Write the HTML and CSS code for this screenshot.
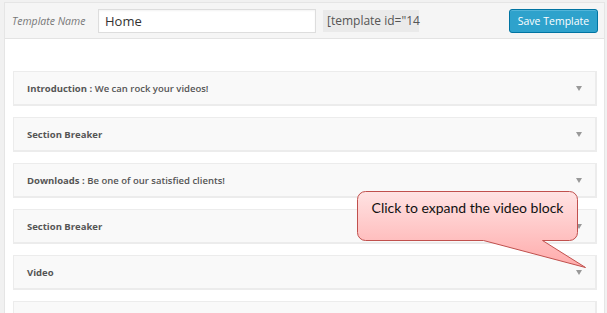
FILE: index.html
```html
<!DOCTYPE html>
<html lang="en">
<head>
    <meta charset="UTF-8">
    <title>Template Builder</title>
    <link rel="stylesheet" href="styles.css">
</head>
<body>
    <div class="panel">
        <div class="panel-head">
            <label class="name-label" for="tplName">Template Name</label>
            <input class="name-input" id="tplName" type="text" value="Home">
            <div class="shortcode">[template id="14</div>
            <button class="btn-save">Save Template</button>
        </div>

        <div class="blocks">
            <div class="block">
                <span class="block-title"><b>Introduction :</b> We can rock your videos!</span>
                <span class="toggle"></span>
            </div>
            <div class="block">
                <span class="block-title"><b>Section Breaker</b></span>
                <span class="toggle"></span>
            </div>
            <div class="block">
                <span class="block-title"><b>Downloads :</b> Be one of our satisfied clients!</span>
                <span class="toggle"></span>
            </div>
            <div class="block">
                <span class="block-title"><b>Section Breaker</b></span>
                <span class="toggle"></span>
            </div>
            <div class="block">
                <span class="block-title"><b>Video</b></span>
                <span class="toggle"></span>
            </div>
            <div class="block">
                <span class="block-title"></span>
            </div>
        </div>

        <!-- callout pointing at the video row toggle -->
        <div class="callout">
            <svg width="240" height="90" viewBox="0 0 240 90">
                <defs>
                    <linearGradient id="pink" x1="0" y1="0" x2="0" y2="1">
                        <stop offset="0" stop-color="#ffe3e3"/>
                        <stop offset="1" stop-color="#ffaaaa"/>
                    </linearGradient>
                </defs>
                <path d="M8.5 0.5 H212.5 A8 8 0 0 1 220.5 8.5 V41.5 A8 8 0 0 1 212.5 49.5 H185.5 L228.5 76.5 L126.5 49.5 H8.5 A8 8 0 0 1 0.5 41.5 V8.5 A8 8 0 0 1 8.5 0.5 Z"
                      fill="url(#pink)" stroke="#c0504d" stroke-width="1"/>
            </svg>
            <div class="callout-text">Click to expand the video block</div>
        </div>
    </div>
</body>
</html>
```

FILE: styles.css
```css
* {
    margin: 0;
    padding: 0;
    box-sizing: border-box;
}

body {
    font-family: 'Open Sans', 'Liberation Sans', sans-serif;
    background: #f1f1f1;
    padding: 2px 2px 0 4px;
    height: 313px;
    overflow: hidden;
}

.panel {
    position: relative;
    width: 601px;
    height: 311px;
    overflow: hidden;
    background: #fff;
    border: 1px solid #e5e5e5;
    border-bottom: none;
}

.panel-head {
    display: flex;
    align-items: center;
    height: 36px;
    padding: 0 6px 0 7px;
    background: #f5f5f5;
    border-bottom: 1px solid #e3e3e3;
}

.name-label {
    font-size: 10.5px;
    font-style: italic;
    color: #777;
    width: 86px;
}

.name-input {
    width: 218px;
    height: 24px;
    padding: 0 6px;
    border: 1px solid #ddd;
    font-family: 'Open Sans', 'Liberation Sans', sans-serif;
    font-size: 13px;
    color: #333;
    background: #fff;
    box-shadow: inset 0 1px 2px rgba(0, 0, 0, 0.05);
}

.shortcode {
    width: 96px;
    height: 22px;
    line-height: 22px;
    margin-left: 7px;
    padding-left: 4px;
    background: #eaeaea;
    font-size: 12px;
    color: #555;
    white-space: nowrap;
}

.btn-save {
    margin-left: auto;
    width: 89px;
    height: 24px;
    background: #2ea2cc;
    border: 1px solid #0074a2;
    border-radius: 3px;
    color: #fff;
    font-family: 'Open Sans', 'Liberation Sans', sans-serif;
    font-size: 10.5px;
    box-shadow: inset 0 1px 0 rgba(120, 200, 230, 0.5);
}

.blocks {
    display: flex;
    flex-direction: column;
    gap: 11px;
    padding: 32px 7px 0 8px;
}

.block {
    display: flex;
    align-items: center;
    justify-content: space-between;
    height: 35px;
    padding: 0 13px 0 13px;
    background: #f9f9f9;
    border: 2px solid #ececec;
    border-width: 1px 2px 2px 1px;
    flex-shrink: 0;
}

.block-title {
    font-size: 9.5px;
    font-weight: 600;
    color: #555;
}

.block-title b {
    font-weight: 700;
}

.toggle {
    width: 0;
    height: 0;
    margin-top: 1px;
    border-left: 3.5px solid transparent;
    border-right: 3.5px solid transparent;
    border-top: 5px solid #999;
}

.callout {
    position: absolute;
    left: 352px;
    top: 188px;
    width: 240px;
    height: 90px;
}

.callout svg {
    display: block;
}

.callout-text {
    position: absolute;
    top: 8px;
    left: 0;
    width: 221px;
    text-align: center;
    font-family: 'Lato', 'Liberation Sans', sans-serif;
    font-size: 14px;
    color: #111;
}
```
